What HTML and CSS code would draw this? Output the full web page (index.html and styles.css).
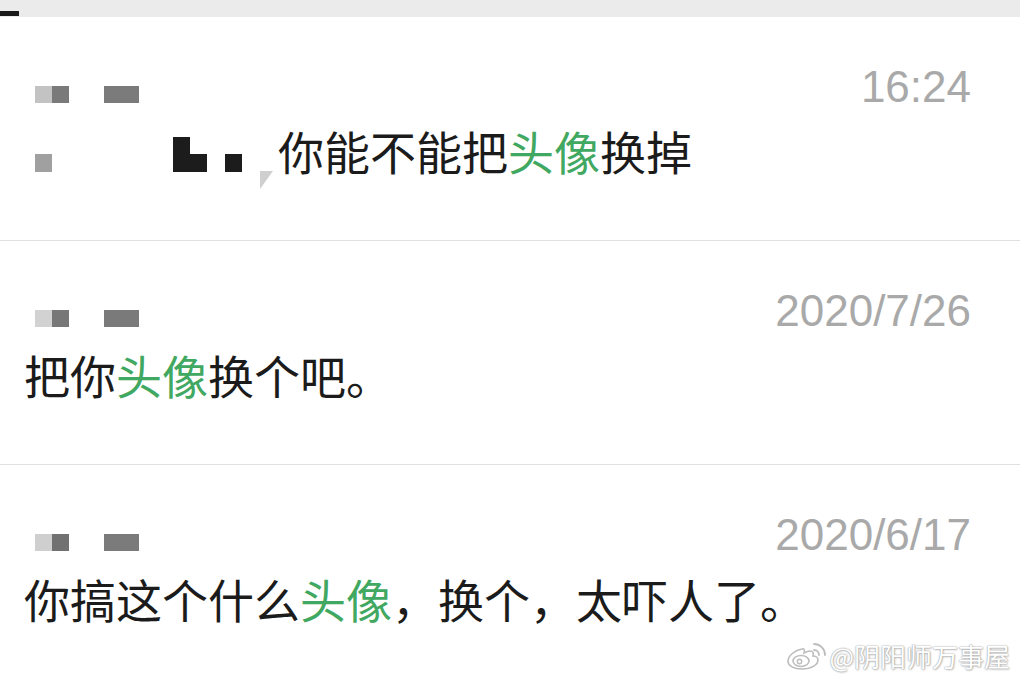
FILE: index.html
```html
<!DOCTYPE html>
<html lang="zh-CN">
<head>
    <meta charset="UTF-8">
    <meta name="viewport" content="width=device-width, initial-scale=1.0">
    <title>头像</title>
    <link rel="stylesheet" href="styles.css">
</head>
<body>
    <div class="topbar">
        <span class="topbar-mark"></span>
    </div>

    <div class="list">
        <!-- first message: sender name is pixelated inside the text too -->
        <div class="item">
            <div class="item-head">
                <svg class="name" width="104" height="17" viewBox="0 0 104 17">
                    <rect x="0" y="0" width="17" height="17" fill="#c3c3c3"/>
                    <rect x="17" y="0" width="17" height="17" fill="#7a7a7a"/>
                    <rect x="69" y="0" width="35" height="17" fill="#7b7b7b"/>
                </svg>
                <span class="time">16:24</span>
            </div>
            <div class="item-msg">
                <svg class="mosaic" width="253" height="62" viewBox="0 0 253 62">
                    <rect x="10" y="27" width="17" height="18" fill="#a0a0a0"/>
                    <rect x="148" y="10" width="17" height="35" fill="#1c1c1c"/>
                    <rect x="165" y="27" width="17" height="18" fill="#1c1c1c"/>
                    <rect x="200" y="27" width="17" height="18" fill="#1c1c1c"/>
                    <polygon points="235,44 248,44 235,62" fill="#cfcfcf"/>
                </svg>
                <span>你能不能把<em class="hl">头像</em>换掉</span>
            </div>
        </div>

        <div class="item">
            <div class="item-head">
                <svg class="name" width="104" height="17" viewBox="0 0 104 17">
                    <rect x="0" y="0" width="17" height="17" fill="#d2d2d2"/>
                    <rect x="17" y="0" width="17" height="17" fill="#777777"/>
                    <rect x="69" y="0" width="35" height="17" fill="#7a7a7a"/>
                </svg>
                <span class="time">2020/7/26</span>
            </div>
            <div class="item-msg">
                <span>把你<em class="hl">头像</em>换个吧。</span>
            </div>
        </div>

        <div class="item item-last">
            <div class="item-head">
                <svg class="name" width="104" height="17" viewBox="0 0 104 17">
                    <rect x="0" y="0" width="17" height="17" fill="#cfcfcf"/>
                    <rect x="17" y="0" width="17" height="17" fill="#717171"/>
                    <rect x="69" y="0" width="35" height="17" fill="#7b7b7b"/>
                </svg>
                <span class="time">2020/6/17</span>
            </div>
            <div class="item-msg">
                <span>你搞这个什么<em class="hl">头像</em>，换个，太吓人了。</span>
            </div>
        </div>
    </div>

    <!-- weibo watermark -->
    <div class="watermark">
        <svg class="wb-logo" width="42" height="30" viewBox="0 0 42 30">
            <path d="M17 8c-7 1-14 7-14 12 0 5 6 8 14 8 9 0 16-4 16-9 0-3-3-4-5-4 1-3 0-5-3-5-2 0-4 1-6 2 1-3-0-5-2-4z" fill="#fff" stroke="#bdbdbd" stroke-width="1.6"/>
            <ellipse cx="16" cy="20" rx="8" ry="5.5" fill="#fff" stroke="#bdbdbd" stroke-width="1.6"/>
            <circle cx="14.5" cy="20.5" r="2.2" fill="#fff" stroke="#bdbdbd" stroke-width="1.4"/>
            <path d="M29 9a5 5 0 0 1 5 5" fill="none" stroke="#bdbdbd" stroke-width="1.8" stroke-linecap="round"/>
            <path d="M29 3a11 11 0 0 1 11 11" fill="none" stroke="#bdbdbd" stroke-width="1.8" stroke-linecap="round"/>
        </svg>
        <span class="wb-name">@阴阳师万事屋</span>
    </div>
</body>
</html>
```

FILE: styles.css
```css
html, body {
    margin: 0;
    padding: 0;
    height: 100%;
}

body {
    position: relative;
    overflow: hidden;
    background: #fff;
    font-family: "Noto Sans CJK SC", "Noto Sans", sans-serif;
    color: #1b1b1b;
}

.topbar {
    height: 17px;
    background: #ebebeb;
    display: flex;
    align-items: flex-end;
}

.topbar-mark {
    display: block;
    width: 19px;
    height: 5px;
    margin-bottom: 1px;
    background: #1a1a1a;
}

.item {
    height: 224px;
    box-sizing: border-box;
    padding: 48px 49px 0 24px;
    border-bottom: 1px solid #e0e0e0;
}

.item-last {
    border-bottom: none;
}

.item-head {
    display: flex;
    justify-content: space-between;
    align-items: flex-start;
    height: 44px;
}

.name {
    display: block;
    margin: 21px 0 0 11px;
}

.time {
    font-family: "Liberation Sans", Arial, sans-serif;
    font-size: 44px;
    line-height: 44px;
    color: #a9a9a9;
}

.item-msg {
    display: flex;
    align-items: flex-start;
    margin-top: 18px;
    font-size: 46px;
    line-height: 46px;
    white-space: nowrap;
}

.mosaic {
    display: block;
    flex: none;
    margin-left: 1px;
    margin-bottom: -16px;
}

.hl {
    font-style: normal;
    color: #41a862;
}

/* watermark sits over the last row */
.watermark {
    position: absolute;
    right: 10px;
    bottom: 9px;
    display: flex;
    align-items: center;
    gap: 2px;
}

.wb-logo {
    display: block;
}

.wb-name {
    font-size: 26px;
    line-height: 30px;
    color: #fff;
    text-shadow: 0 0 1px #9a9a9a, 0 0 2px #b0b0b0, 1px 1px 2px #c8c8c8;
}
```
